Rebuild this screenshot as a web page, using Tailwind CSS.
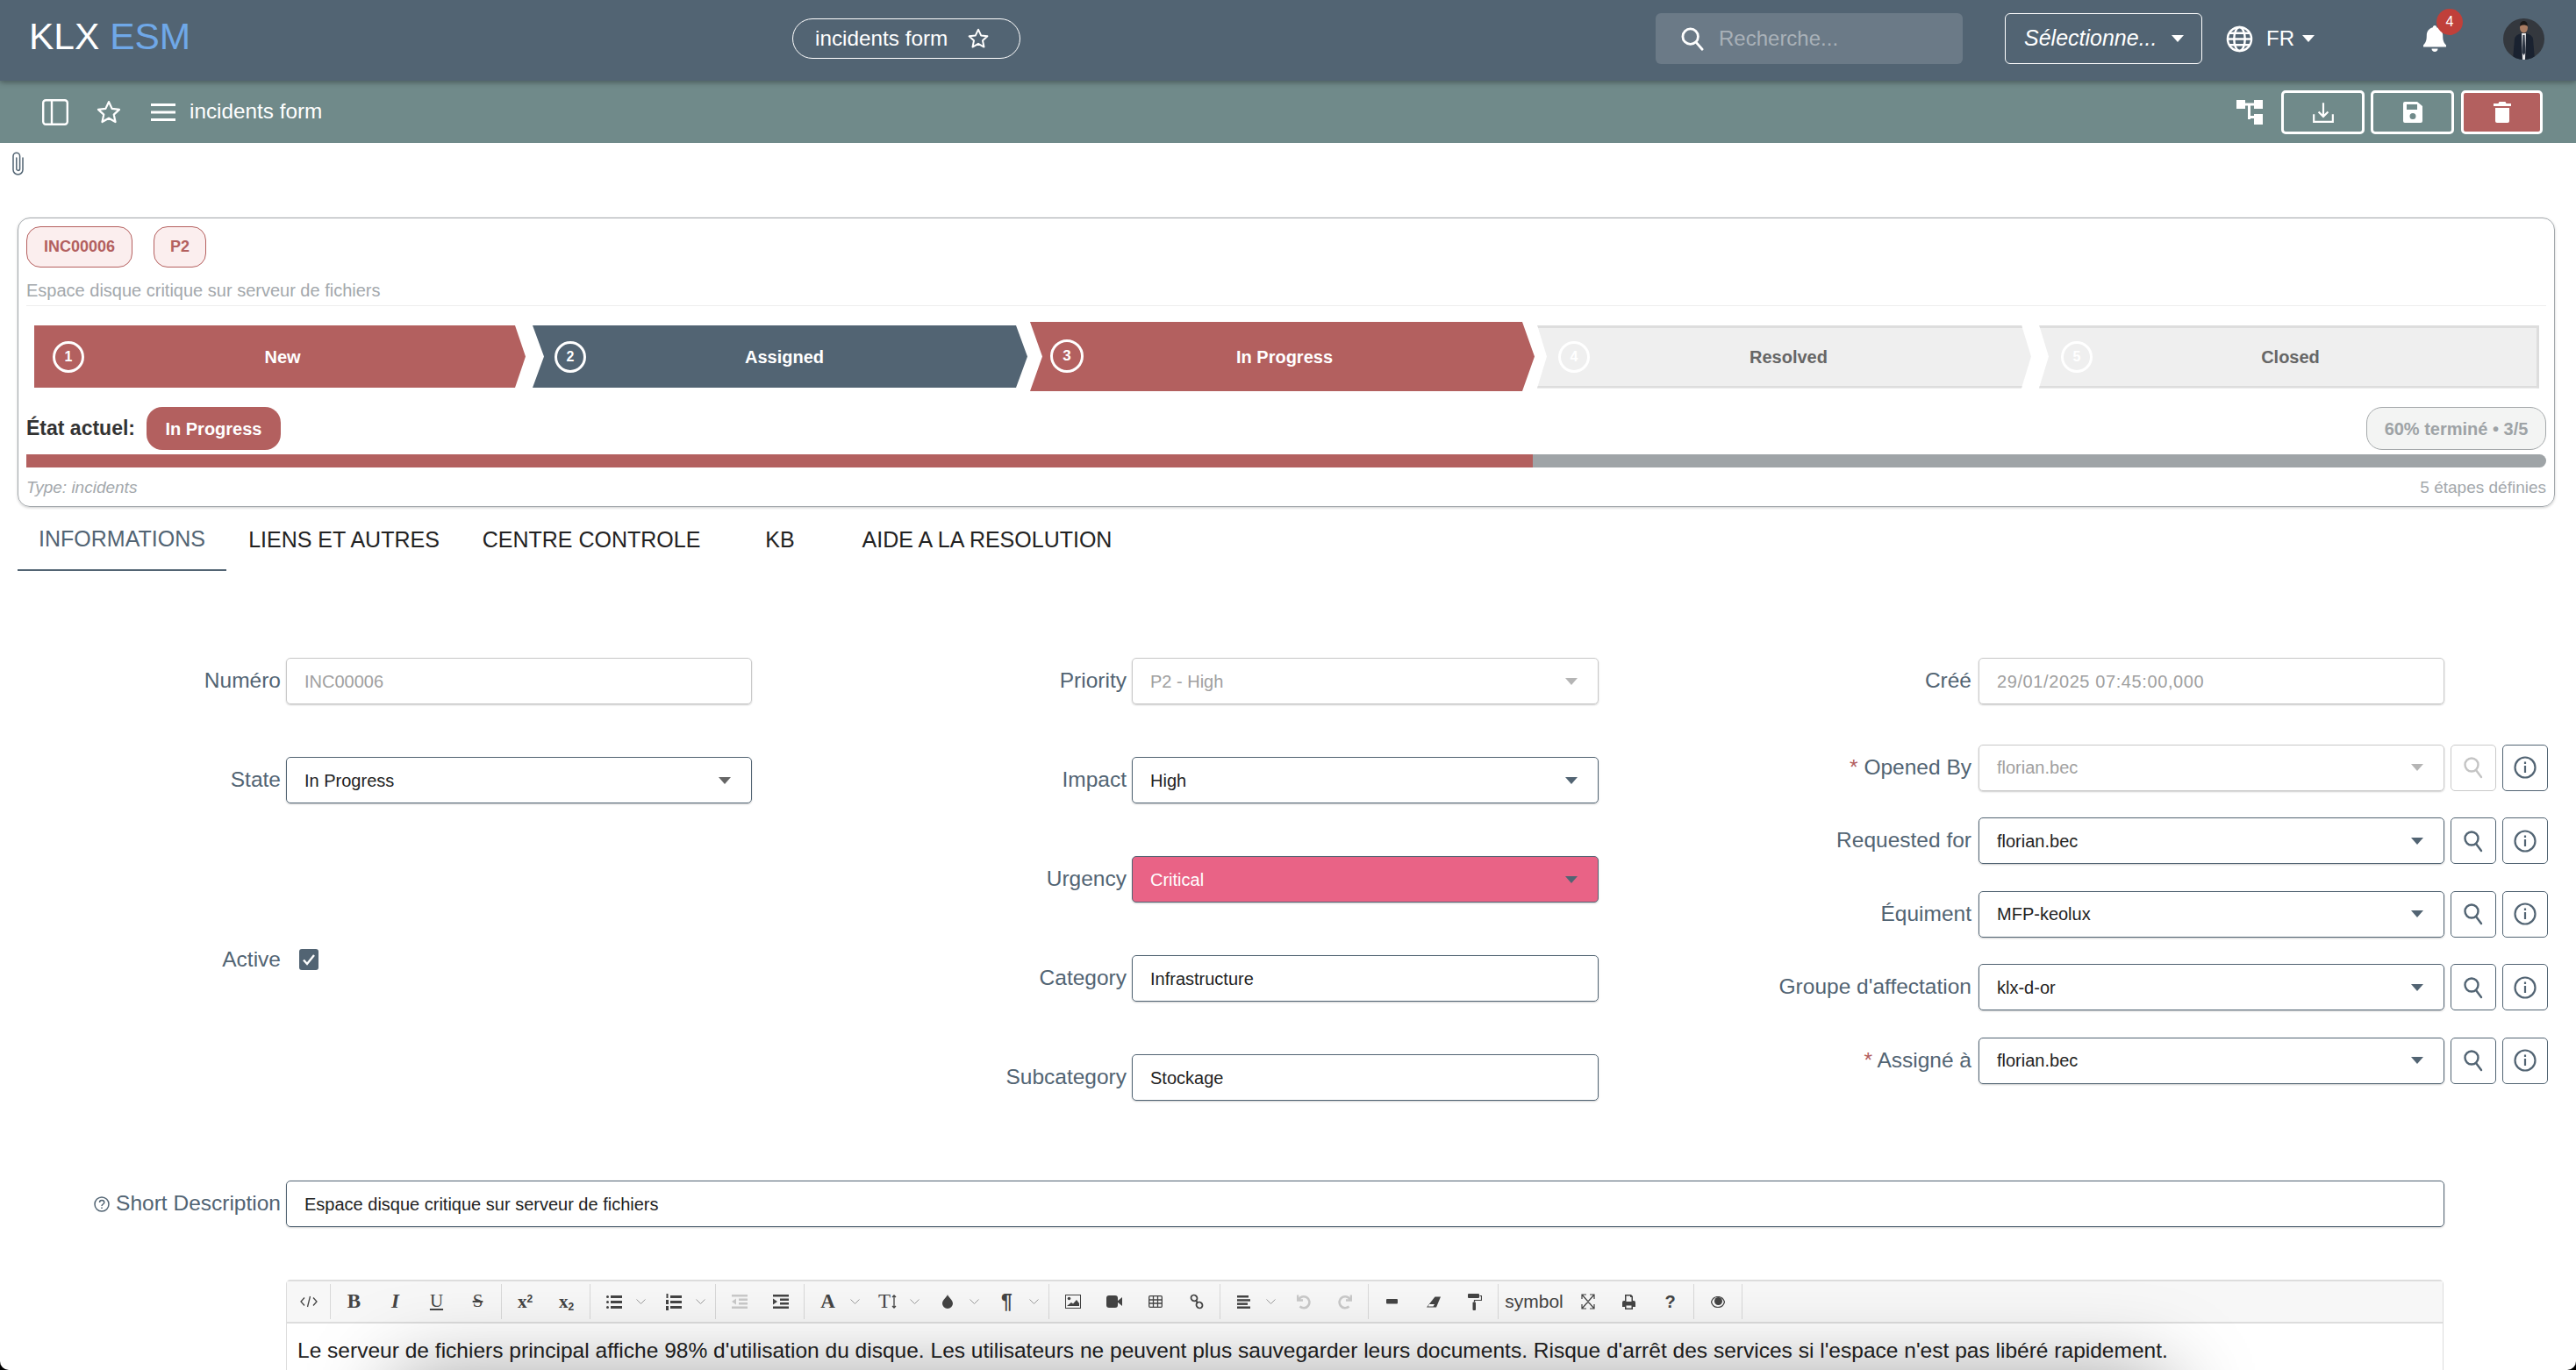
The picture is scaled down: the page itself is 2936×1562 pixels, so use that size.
<!DOCTYPE html>
<html lang="fr">
<head>
    <meta charset="UTF-8">
    <title>incidents form</title>
    <script src="https://cdn.jsdelivr.net/npm/@tailwindcss/browser@4"></script>
</head>
<body class="bg-black overflow-hidden font-['Liberation_Sans',Arial,sans-serif]">
<div class="relative w-[2936px] h-[1562px] bg-white rounded-b-[10px] overflow-hidden">

    <!-- top bar -->
    <header class="relative z-10 flex items-center h-[92px] pb-[4px] pl-[33px] pr-[36px] bg-[#526473] text-white shadow-[0_2px_6px_rgba(0,0,0,.35)]">
        <div class="w-[181px] -mt-[3px] text-[42.500px] leading-none whitespace-nowrap">KLX <span class="text-[#6fa8e8]">ESM</span></div>
        <div class="ml-[689px] flex items-center w-[260px] h-[46px] pl-[25px] rounded-full border border-white text-[24.300px]">
            incidents form
            <svg class="ml-[22px]" width="26" height="26" viewBox="0 0 24 24" fill="none" stroke="white" stroke-width="1.8" stroke-linejoin="round"><path d="M12 2.5l2.9 6.2 6.7.8-5 4.6 1.4 6.7-6-3.4-6 3.4 1.4-6.7-5-4.6 6.700-.8z"/></svg>
        </div>
        <div class="ml-auto flex items-center w-[350px] h-[58px] pl-[28px] rounded-[6px] bg-[#6b7a87] text-[24px] text-[#a9b1b8]">
            <svg width="28" height="28" viewBox="0 0 24 24" fill="none" stroke="white" stroke-width="2.4" stroke-linecap="round"><circle cx="10" cy="10" r="7.5"/><path d="M15.5 15.5l6 7"/></svg>
            <span class="ml-[16px]">Recherche...</span>
        </div>
        <div class="ml-[48px] flex items-center justify-between w-[225px] h-[58px] pl-[21px] pr-[20px] rounded-[6px] border border-white text-[25px] italic">
            Sélectionne...
            <span class="w-0 h-0 border-x-[7px] border-x-transparent border-t-[8px] border-t-white"></span>
        </div>
        <svg class="ml-[27px]" width="31" height="31" viewBox="0 0 24 24" fill="none" stroke="white" stroke-width="1.9"><circle cx="12" cy="12" r="10.5"/><ellipse cx="12" cy="12" rx="4.8" ry="10.5"/><path d="M1.5 12h21M3 6.8h18M3 17.2h18"/></svg>
        <span class="ml-[15px] text-[24px]">FR</span>
        <span class="ml-[9px] w-0 h-0 border-x-[7px] border-x-transparent border-t-[8px] border-t-white"></span>
        <div class="relative ml-[124px] w-[26px] h-[30px]">
            <svg width="26" height="30" viewBox="0 0 26 30" fill="white"><path d="M13 0c1.300 0 2.200 1 2.200 2.300 4.400 1 7 4.700 7 9.200 0 6 1.300 8.500 3.800 11v2H0v-2c2.500-2.500 3.800-5 3.800-11 0-4.500 2.600-8.200 7-9.200C10.800 1 11.700 0 13 0z"/><path d="M9.500 26.500h7c0 2-1.500 3.500-3.500 3.500s-3.500-1.500-3.500-3.500z"/></svg>
            <span class="absolute -top-[19px] left-[15px] flex items-center justify-center w-[30px] h-[30px] rounded-full bg-[#c0403a] text-[16px]">4</span>
        </div>
        <div class="ml-[65px] w-[47px] h-[47px] rounded-full overflow-hidden">
            <svg width="47" height="47" viewBox="0 0 47 47"><rect width="47" height="47" fill="#34383e"/><path d="M11 47l2-24c1-4 6-6 10.500-6s9.500 2 10.500 6l2 24z" fill="#1a2230"/><path d="M21 17h5l-1 30h-3z" fill="#e8e8ea"/><path d="M22.500 19h2l.8 20-1.800 3-1.800-3z" fill="#2b3442"/><ellipse cx="23.500" cy="10.500" rx="4.500" ry="6" fill="#a97c62"/><path d="M19 9c0-4 2-6 4.500-6s4.500 2 4.500 6c-2-2-7-2-9 0z" fill="#1b1a1a"/></svg>
        </div>
    </header>

    <!-- sub bar -->
    <div class="flex items-center h-[71px] pl-[48px] pr-[38px] bg-[#708a8a] text-white">
        <svg width="30" height="30" viewBox="0 0 30 30" fill="none" stroke="white" stroke-width="2.400"><rect x="1.200" y="1.200" width="27.600" height="27.600" rx="3"/><path d="M11 1v28"/></svg>
        <svg class="ml-[31px]" width="30" height="30" viewBox="0 0 24 24" fill="none" stroke="white" stroke-width="1.800" stroke-linejoin="round"><path d="M12 2.500l2.900 6.200 6.700.8-5 4.600 1.400 6.700-6-3.400-6 3.400 1.400-6.700-5-4.600 6.700-.8z"/></svg>
        <svg class="ml-[33px]" width="28" height="20" viewBox="0 0 28 20" fill="white"><rect width="28" height="3"/><rect y="8.500" width="28" height="3"/><rect y="17" width="28" height="3"/></svg>
        <span class="ml-[16px] text-[24.300px]">incidents form</span>
        <svg class="ml-auto" width="30" height="28" viewBox="0 0 30 28" fill="white"><rect width="10" height="10"/><rect x="20" width="10" height="10"/><rect x="10" y="3.500" width="10" height="3"/><rect x="13" y="6" width="3" height="16"/><rect x="13" y="18" width="8" height="3"/><rect x="20" y="16" width="10" height="12"/></svg>
        <div class="ml-[21px] flex items-center justify-center w-[95px] h-[50px] rounded-[5px] border-[3px] border-white">
            <svg width="26" height="26" viewBox="0 0 24 24" fill="none" stroke="white" stroke-width="2"><path d="M12 2v14M7 11.500l5 5 5-5"/><path d="M2 14v8h20v-8"/></svg>
        </div>
        <div class="ml-[7px] flex items-center justify-center w-[95px] h-[50px] rounded-[5px] border-[3px] border-white">
            <svg width="22" height="24" viewBox="0 0 22 24" fill="white" fill-rule="evenodd"><path d="M2 0h14l6 5v17a2 2 0 0 1-2 2H2a2 2 0 0 1-2-2V2a2 2 0 0 1 2-2zM4 3v6h12V3zM11 13a3.500 3.500 0 1 0 0 7 3.500 3.500 0 0 0 0-7z"/></svg>
        </div>
        <div class="ml-[8px] flex items-center justify-center w-[93px] h-[50px] rounded-[5px] border-[3px] border-white bg-[#b3605f]">
            <svg width="20" height="24" viewBox="0 0 20 24" fill="white"><path d="M6.500 0h7l1 2H20v3H0V2h5.500z"/><path d="M2 7h16v15a2 2 0 0 1-2 2H4a2 2 0 0 1-2-2z"/></svg>
        </div>
    </div>

    <!-- attachment -->
    <div class="h-[85px] pl-[13px] pt-[10px]">
        <svg width="15" height="27" viewBox="0 0 15 27" fill="none" stroke="#526473" stroke-width="1.500" stroke-linecap="round"><path d="M13 7v13.500a5.500 5.500 0 0 1-11 0V5a3.800 3.800 0 0 1 7.600 0v14.500a1.900 1.900 0 0 1-3.800 0V7"/></svg>
    </div>

    <!-- workflow card -->
    <section class="ml-[20px] w-[2892px] px-[9px] pt-[9px] pb-[9px] rounded-[14px] border border-[#a4a9ad] shadow-[0_1px_3px_rgba(0,0,0,.2)]">
        <div class="flex gap-[24px]">
            <span class="flex items-center justify-center w-[121px] h-[47px] rounded-[16px] border border-[#b5605f] bg-[#fbeeee] text-[18px] font-bold text-[#b3605f]">INC00006</span>
            <span class="flex items-center justify-center w-[60px] h-[47px] rounded-[16px] border border-[#b5605f] bg-[#fbeeee] text-[18px] font-bold text-[#b3605f]">P2</span>
        </div>
        <p class="mt-[12px] text-[20px] leading-[28px] text-[#a3a8ac]">Espace disque critique sur serveur de fichiers</p>
        <div class="mt-[3px] h-[1px] bg-[#eeeeee]"></div>

        <div class="mt-[18px] flex items-center h-[79px] ml-[9px] text-[20px] font-bold">
            <div class="relative flex items-center justify-center w-[560px] h-[71px] pl-[6px] bg-[#b3605f] text-white [clip-path:polygon(0_0,548px_0,560px_50%,548px_100%,0_100%)]">
                <span class="absolute left-[21px] top-[18px] flex items-center justify-center w-[36px] h-[36px] rounded-full border-[3px] border-white text-[16px]">1</span>New
            </div>
            <div class="relative ml-[8px] flex items-center justify-center w-[564px] h-[71px] pl-[10px] bg-[#526473] text-white [clip-path:polygon(0_0,551px_0,564px_50%,551px_100%,0_100%,13px_50%)]">
                <span class="absolute left-[25px] top-[18px] flex items-center justify-center w-[36px] h-[36px] rounded-full border-[3px] border-white text-[16px]">2</span>Assigned
            </div>
            <div class="relative ml-[3px] flex items-center justify-center w-[575px] h-[79px] pl-[5px] bg-[#b3605f] text-white [clip-path:polygon(0_0,561px_0,575px_50%,561px_100%,0_100%,14px_50%)]">
                <span class="absolute left-[23px] top-[20px] flex items-center justify-center w-[38px] h-[38px] rounded-full border-[3px] border-white text-[17px]">3</span>In Progress
            </div>
            <div class="relative ml-[3px] flex items-center justify-center w-[563px] h-[72px] pl-[10px] border-y-[3px] border-[#dddddd] bg-[#efefef] text-[#666666] [clip-path:polygon(0_0,552px_0,563px_50%,552px_100%,0_100%,11px_50%)]">
                <span class="absolute left-[24px] top-[15px] flex items-center justify-center w-[36px] h-[36px] rounded-full border-[3px] border-white text-[16px] text-white">4</span>Resolved
            </div>
            <div class="relative ml-[9px] flex items-center justify-center w-[570px] h-[72px] pl-[6px] border-y-[3px] border-r-[3px] border-[#dddddd] bg-[#efefef] text-[#666666] [clip-path:polygon(0_0,100%_0,100%_100%,0_100%,11px_50%)]">
                <span class="absolute left-[25px] top-[15px] flex items-center justify-center w-[36px] h-[36px] rounded-full border-[3px] border-white text-[16px] text-white">5</span>Closed
            </div>
        </div>

        <div class="mt-[18px] flex items-center h-[49px]">
            <span class="text-[23px] font-bold text-[#333333]">État actuel:</span>
            <span class="ml-[13px] flex items-center justify-center w-[153px] h-[49px] rounded-[18px] bg-[#b3605f] text-[20px] font-bold text-white">In Progress</span>
            <span class="ml-auto flex items-center justify-center w-[205px] h-[49px] rounded-[18px] border border-[#a5a9ab] bg-[#f3f4f3] text-[20px] font-bold text-[#9ea3a6]">60% terminé • 3/5</span>
        </div>
        <div class="mt-[5px] h-[15px] rounded-r-full bg-[#9fa4a7] overflow-hidden">
            <div class="h-full bg-[#b3605f]" style="width: 59.8%"></div>
        </div>
        <div class="mt-[11px] flex justify-between text-[19px] leading-[24px] text-[#a3a8ac]">
            <span class="italic">Type: incidents</span>
            <span>5 étapes définies</span>
        </div>
    </section>

    <!-- tabs -->
    <nav class="flex h-[73px] pl-[20px] text-[25px] text-[#222222]">
        <a class="flex items-center justify-center w-[238px] pt-[2px] border-b-2 border-[#526473] text-[#526473]">INFORMATIONS</a>
        <a class="flex items-center justify-center w-[268px] pt-[2px]">LIENS ET AUTRES</a>
        <a class="flex items-center justify-center w-[296px] pt-[2px]">CENTRE CONTROLE</a>
        <a class="flex items-center justify-center w-[134px] pt-[2px]">KB</a>
        <a class="flex items-center justify-center w-[338px] pt-[2px]">AIDE A LA RESOLUTION</a>
    </nav>

    <!-- form -->
    <div class="flex items-start pt-[99px] text-[24.500px] text-[#526473]">
        <div class="flex flex-col gap-[60px] w-[857px]">
            <div class="flex items-center h-[53px]">
                <label class="w-[320px] text-right">Numéro</label>
                <div class="ml-[6px] flex items-center w-[531px] h-[53px] px-[20px] rounded-[5px] border border-[#c9c9c9] text-[20px] text-[#a0a0a0] shadow-[0_1px_2px_rgba(0,0,0,.2)]">INC00006</div>
            </div>
            <div class="flex items-center h-[53px]">
                <label class="w-[320px] text-right">State</label>
                <div class="ml-[6px] flex items-center justify-between w-[531px] h-[53px] pl-[20px] pr-[23px] rounded-[5px] border border-[#526473] text-[20px] text-[#222222] shadow-[0_1px_2px_rgba(0,0,0,.2)]">In Progress<span class="w-0 h-0 border-x-[7.500px] border-x-transparent border-t-[8px] border-t-[#666666]"></span></div>
            </div>
            <div class="flex items-center h-[24px] mt-[106px]">
                <label class="w-[320px] text-right">Active</label>
                <span class="ml-[21px] flex items-center justify-center w-[22px] h-[24px] rounded-[3px] bg-[#526473]">
                    <svg width="16" height="16" viewBox="0 0 16 16" fill="none" stroke="white" stroke-width="2.400"><path d="M2 8.500l4 4.500 8-10"/></svg>
                </span>
            </div>
        </div>

        <div class="flex flex-col gap-[60px] w-[965px]">
            <div class="flex items-center h-[53px]">
                <label class="w-[427px] text-right">Priority</label>
                <div class="ml-[6px] flex items-center justify-between w-[532px] h-[53px] pl-[20px] pr-[23px] rounded-[5px] border border-[#c9c9c9] text-[20px] text-[#a0a0a0] shadow-[0_1px_2px_rgba(0,0,0,.2)]">P2 - High<span class="w-0 h-0 border-x-[7.500px] border-x-transparent border-t-[8px] border-t-[#b5b5b5]"></span></div>
            </div>
            <div class="flex items-center h-[53px]">
                <label class="w-[427px] text-right">Impact</label>
                <div class="ml-[6px] flex items-center justify-between w-[532px] h-[53px] pl-[20px] pr-[23px] rounded-[5px] border border-[#526473] text-[20px] text-[#222222] shadow-[0_1px_2px_rgba(0,0,0,.2)]">High<span class="w-0 h-0 border-x-[7.500px] border-x-transparent border-t-[8px] border-t-[#526473]"></span></div>
            </div>
            <div class="flex items-center h-[53px]">
                <label class="w-[427px] text-right">Urgency</label>
                <div class="ml-[6px] flex items-center justify-between w-[532px] h-[53px] pl-[20px] pr-[23px] rounded-[5px] border border-[#526473] bg-[#e96386] text-[20px] text-white shadow-[0_1px_2px_rgba(0,0,0,.2)]">Critical<span class="w-0 h-0 border-x-[7.500px] border-x-transparent border-t-[8px] border-t-[#526473]"></span></div>
            </div>
            <div class="flex items-center h-[53px]">
                <label class="w-[427px] text-right">Category</label>
                <div class="ml-[6px] flex items-center w-[532px] h-[53px] px-[20px] rounded-[5px] border border-[#526473] text-[20px] text-[#222222] shadow-[0_1px_2px_rgba(0,0,0,.2)]">Infrastructure</div>
            </div>
            <div class="flex items-center h-[53px]">
                <label class="w-[427px] text-right">Subcategory</label>
                <div class="ml-[6px] flex items-center w-[532px] h-[53px] px-[20px] rounded-[5px] border border-[#526473] text-[20px] text-[#222222] shadow-[0_1px_2px_rgba(0,0,0,.2)]">Stockage</div>
            </div>
        </div>

        <div class="flex flex-col gap-[30.500px] w-[1114px]">
            <div class="flex items-center h-[53px] mb-[15px]">
                <label class="w-[425px] text-right">Créé</label>
                <div class="ml-[8px] flex items-center w-[531px] h-[53px] px-[20px] rounded-[5px] border border-[#c9c9c9] text-[20px] tracking-[.6px] text-[#a0a0a0] shadow-[0_1px_2px_rgba(0,0,0,.2)]">29/01/2025 07:45:00,000</div>
            </div>
            <div class="flex items-center h-[53px]">
                <label class="w-[425px] text-right"><span class="text-[#b3605f]">*</span> Opened By</label>
                <div class="ml-[8px] flex items-center justify-between w-[531px] h-[53px] px-[20px] rounded-[5px] border border-[#c9c9c9] text-[20px] text-[#a0a0a0] shadow-[0_1px_2px_rgba(0,0,0,.2)]">florian.bec<span class="mr-[3px] w-0 h-0 border-x-[7.500px] border-x-transparent border-t-[8px] border-t-[#b5b5b5]"></span></div>
                <span class="ml-[7px] flex items-center justify-center w-[52px] h-[53px] rounded-[5px] border border-[#c9c9c9]"><svg width="24" height="26" viewBox="0 0 24 26" fill="none" stroke="#c4c4c4" stroke-width="2.400" stroke-linecap="round"><circle cx="10" cy="10" r="7.500"/><path d="M15 16l6 8"/></svg></span>
                <span class="ml-[7px] flex items-center justify-center w-[52px] h-[53px] rounded-[5px] border border-[#526473]"><svg width="26" height="26" viewBox="0 0 26 26" fill="none" stroke="#526473" stroke-width="2.200"><circle cx="13" cy="13" r="11.500"/><path d="M13 11v8M13 6.500v2.500"/></svg></span>
            </div>
            <div class="flex items-center h-[53px]">
                <label class="w-[425px] text-right">Requested for</label>
                <div class="ml-[8px] flex items-center justify-between w-[531px] h-[53px] px-[20px] rounded-[5px] border border-[#526473] text-[20px] text-[#222222] shadow-[0_1px_2px_rgba(0,0,0,.2)]">florian.bec<span class="mr-[3px] w-0 h-0 border-x-[7.500px] border-x-transparent border-t-[8px] border-t-[#526473]"></span></div>
                <span class="ml-[7px] flex items-center justify-center w-[52px] h-[53px] rounded-[5px] border border-[#526473]"><svg width="24" height="26" viewBox="0 0 24 26" fill="none" stroke="#526473" stroke-width="2.400" stroke-linecap="round"><circle cx="10" cy="10" r="7.500"/><path d="M15 16l6 8"/></svg></span>
                <span class="ml-[7px] flex items-center justify-center w-[52px] h-[53px] rounded-[5px] border border-[#526473]"><svg width="26" height="26" viewBox="0 0 26 26" fill="none" stroke="#526473" stroke-width="2.200"><circle cx="13" cy="13" r="11.500"/><path d="M13 11v8M13 6.500v2.500"/></svg></span>
            </div>
            <div class="flex items-center h-[53px]">
                <label class="w-[425px] text-right">Équiment</label>
                <div class="ml-[8px] flex items-center justify-between w-[531px] h-[53px] px-[20px] rounded-[5px] border border-[#526473] text-[20px] text-[#222222] shadow-[0_1px_2px_rgba(0,0,0,.2)]">MFP-keolux<span class="mr-[3px] w-0 h-0 border-x-[7.500px] border-x-transparent border-t-[8px] border-t-[#526473]"></span></div>
                <span class="ml-[7px] flex items-center justify-center w-[52px] h-[53px] rounded-[5px] border border-[#526473]"><svg width="24" height="26" viewBox="0 0 24 26" fill="none" stroke="#526473" stroke-width="2.400" stroke-linecap="round"><circle cx="10" cy="10" r="7.500"/><path d="M15 16l6 8"/></svg></span>
                <span class="ml-[7px] flex items-center justify-center w-[52px] h-[53px] rounded-[5px] border border-[#526473]"><svg width="26" height="26" viewBox="0 0 26 26" fill="none" stroke="#526473" stroke-width="2.200"><circle cx="13" cy="13" r="11.500"/><path d="M13 11v8M13 6.500v2.500"/></svg></span>
            </div>
            <div class="flex items-center h-[53px]">
                <label class="w-[425px] text-right">Groupe d'affectation</label>
                <div class="ml-[8px] flex items-center justify-between w-[531px] h-[53px] px-[20px] rounded-[5px] border border-[#526473] text-[20px] text-[#222222] shadow-[0_1px_2px_rgba(0,0,0,.2)]">klx-d-or<span class="mr-[3px] w-0 h-0 border-x-[7.500px] border-x-transparent border-t-[8px] border-t-[#526473]"></span></div>
                <span class="ml-[7px] flex items-center justify-center w-[52px] h-[53px] rounded-[5px] border border-[#526473]"><svg width="24" height="26" viewBox="0 0 24 26" fill="none" stroke="#526473" stroke-width="2.400" stroke-linecap="round"><circle cx="10" cy="10" r="7.500"/><path d="M15 16l6 8"/></svg></span>
                <span class="ml-[7px] flex items-center justify-center w-[52px] h-[53px] rounded-[5px] border border-[#526473]"><svg width="26" height="26" viewBox="0 0 26 26" fill="none" stroke="#526473" stroke-width="2.200"><circle cx="13" cy="13" r="11.500"/><path d="M13 11v8M13 6.500v2.500"/></svg></span>
            </div>
            <div class="flex items-center h-[53px]">
                <label class="w-[425px] text-right"><span class="text-[#b3605f]">*</span> Assigné à</label>
                <div class="ml-[8px] flex items-center justify-between w-[531px] h-[53px] px-[20px] rounded-[5px] border border-[#526473] text-[20px] text-[#222222] shadow-[0_1px_2px_rgba(0,0,0,.2)]">florian.bec<span class="mr-[3px] w-0 h-0 border-x-[7.500px] border-x-transparent border-t-[8px] border-t-[#526473]"></span></div>
                <span class="ml-[7px] flex items-center justify-center w-[52px] h-[53px] rounded-[5px] border border-[#526473]"><svg width="24" height="26" viewBox="0 0 24 26" fill="none" stroke="#526473" stroke-width="2.400" stroke-linecap="round"><circle cx="10" cy="10" r="7.500"/><path d="M15 16l6 8"/></svg></span>
                <span class="ml-[7px] flex items-center justify-center w-[52px] h-[53px] rounded-[5px] border border-[#526473]"><svg width="26" height="26" viewBox="0 0 26 26" fill="none" stroke="#526473" stroke-width="2.200"><circle cx="13" cy="13" r="11.500"/><path d="M13 11v8M13 6.500v2.500"/></svg></span>
            </div>
        </div>
    </div>

    <!-- short description -->
    <div class="mt-[91px] flex items-center h-[53px] text-[24.500px] text-[#526473]">
        <label class="flex items-center justify-end w-[320px]">
            <svg class="mr-[7px]" width="18" height="18" viewBox="0 0 18 18" fill="none" stroke="#526473" stroke-width="1.500"><circle cx="9" cy="9" r="8"/><path d="M6.500 7c0-3.300 5.300-3.300 5.300 0 0 2-2.800 2-2.800 4M9 12.500v1.500"/></svg>
            Short Description
        </label>
        <div class="ml-[6px] flex items-center w-[2460px] h-[53px] px-[20px] rounded-[5px] border border-[#526473] text-[20px] text-[#222222] shadow-[0_1px_2px_rgba(0,0,0,.2)]">Espace disque critique sur serveur de fichiers</div>
    </div>

    <!-- editor -->
    <div class="mt-[60px] ml-[326px] w-[2459px] rounded-t-[5px] border border-[#dddddd] border-t-2 text-[#444444]">
        <div class="flex h-[48px] py-[3px] bg-[#f7f7f7] border-b-2 border-[#dddddd] font-['Liberation_Serif',serif] text-[21px]">
            <div class="flex items-center w-[50px] pl-[1px] border-r border-[#d8d8d8]">
                <span class="flex justify-center w-[47px]"><svg width="20" height="14" viewBox="0 0 20 14" fill="none" stroke="#444" stroke-width="1.300"><path d="M5 2.500L1 7l4 4.500M15 2.500L19 7l-4 4.500M11.500 1l-3 12"/></svg></span>
            </div>
            <div class="flex items-center px-[3px] border-r border-[#d8d8d8]">
                <span class="w-[47px] text-center font-bold text-[23px]">B</span>
                <span class="w-[47px] text-center italic font-bold text-[23px]">I</span>
                <span class="w-[47px] text-center"><u>U</u></span>
                <span class="w-[47px] text-center"><s>S</s></span>
            </div>
            <div class="flex items-center px-[3px] border-r border-[#d8d8d8] font-bold">
                <span class="w-[47px] text-center leading-none">x<sup class="text-[12px] font-['Liberation_Sans',sans-serif]">2</sup></span>
                <span class="w-[47px] text-center leading-none">x<sub class="text-[12px] font-['Liberation_Sans',sans-serif]">2</sub></span>
            </div>
            <div class="flex items-center px-[3px] border-r border-[#d8d8d8]">
                <span class="flex justify-center w-[47px]"><svg width="18" height="15" viewBox="0 0 18 15" fill="#444"><rect y="0" width="3" height="3" rx="1.500"/><rect y="6" width="3" height="3" rx="1.500"/><rect y="12" width="3" height="3" rx="1.500"/><rect x="5" y="0" width="13" height="3"/><rect x="5" y="6" width="13" height="3"/><rect x="5" y="12" width="13" height="3"/></svg></span>
                <span class="flex justify-center w-[15px] mr-[6px]"><svg width="11" height="6" viewBox="0 0 11 6" fill="none" stroke="#9a9a9a" stroke-width="1"><path d="M.500.500l5 5 5-5"/></svg></span>
                <span class="flex justify-center w-[47px]"><svg width="18" height="19" viewBox="0 0 18 19" fill="#444"><rect x="0.500" y="0" width="2" height="5"/><rect y="7" width="3" height="5"/><rect y="14" width="3" height="5"/><rect x="5" y="2" width="13" height="3"/><rect x="5" y="8" width="13" height="3"/><rect x="5" y="14" width="13" height="3"/></svg></span>
                <span class="flex justify-center w-[15px] mr-[6px]"><svg width="11" height="6" viewBox="0 0 11 6" fill="none" stroke="#9a9a9a" stroke-width="1"><path d="M.500.500l5 5 5-5"/></svg></span>
            </div>
            <div class="flex items-center px-[3px] border-r border-[#d8d8d8]">
                <span class="flex justify-center w-[47px]"><svg width="18" height="16" viewBox="0 0 18 16" fill="#c9c9c9"><rect width="18" height="2.500"/><rect x="8" y="4.500" width="10" height="2.500"/><rect x="8" y="9" width="10" height="2.500"/><rect y="13.500" width="18" height="2.500"/><path d="M5 4.500v7L0 8z"/></svg></span>
                <span class="flex justify-center w-[47px]"><svg width="18" height="16" viewBox="0 0 18 16" fill="#444"><rect width="18" height="2.500"/><rect x="8" y="4.500" width="10" height="2.500"/><rect x="8" y="9" width="10" height="2.500"/><rect y="13.500" width="18" height="2.500"/><path d="M0 4.500v7L5 8z"/></svg></span>
            </div>
            <div class="flex items-center px-[3px] border-r border-[#d8d8d8]">
                <span class="w-[47px] text-center font-bold text-[23px]">A</span>
                <span class="flex justify-center w-[15px] mr-[6px]"><svg width="11" height="6" viewBox="0 0 11 6" fill="none" stroke="#9a9a9a" stroke-width="1"><path d="M.500.500l5 5 5-5"/></svg></span>
                <span class="flex items-center justify-center w-[47px] text-[23px]">T<svg class="ml-[1px]" width="6" height="16" viewBox="0 0 6 16" fill="none" stroke="#444" stroke-width="1.300"><path d="M3 1v14M1 3l2-2 2 2M1 13l2 2 2-2"/></svg></span>
                <span class="flex justify-center w-[15px] mr-[6px]"><svg width="11" height="6" viewBox="0 0 11 6" fill="none" stroke="#9a9a9a" stroke-width="1"><path d="M.500.500l5 5 5-5"/></svg></span>
                <span class="flex justify-center w-[47px]"><svg width="12" height="16" viewBox="0 0 12 16" fill="#444"><path d="M6 0c1 3 6 6 6 10.200A6 5.800 0 0 1 0 10.200C0 6 5 3 6 0z"/></svg></span>
                <span class="flex justify-center w-[15px] mr-[6px]"><svg width="11" height="6" viewBox="0 0 11 6" fill="none" stroke="#9a9a9a" stroke-width="1"><path d="M.500.500l5 5 5-5"/></svg></span>
                <span class="w-[47px] text-center font-bold text-[23px] font-['Liberation_Sans',sans-serif]">¶</span>
                <span class="flex justify-center w-[15px] mr-[6px]"><svg width="11" height="6" viewBox="0 0 11 6" fill="none" stroke="#9a9a9a" stroke-width="1"><path d="M.500.500l5 5 5-5"/></svg></span>
            </div>
            <div class="flex items-center px-[3px] border-r border-[#d8d8d8]">
                <span class="flex justify-center w-[47px]"><svg width="18" height="16" viewBox="0 0 18 16"><rect x=".500" y=".500" width="17" height="15" fill="none" stroke="#444"/><circle cx="4.500" cy="4.500" r="1.800" fill="#444"/><path d="M2 13l5-4 2 1.500 4-4.500 3 4v3z" fill="#444"/></svg></span>
                <span class="flex justify-center w-[47px]"><svg width="18" height="14" viewBox="0 0 18 14" fill="#444"><rect width="13" height="14" rx="3"/><path d="M12 7l6-5v10z"/></svg></span>
                <span class="flex justify-center w-[47px]"><svg width="16" height="14" viewBox="0 0 16 14" fill="none" stroke="#444" stroke-width="1.300"><rect x=".700" y=".700" width="14.600" height="12.600" rx="1"/><path d="M.700 5h14.600M.700 9h14.600M5.500 1v12M10.500 1v12"/></svg></span>
                <span class="flex justify-center w-[47px]"><svg width="16" height="18" viewBox="0 0 16 18" fill="none" stroke="#444" stroke-width="1.800"><ellipse cx="5" cy="5" rx="3.600" ry="3.300" transform="rotate(40 5 5)"/><ellipse cx="11" cy="13" rx="3.600" ry="3.300" transform="rotate(40 11 13)"/><path d="M6.500 7.500l3 3"/></svg></span>
            </div>
            <div class="flex items-center px-[3px] border-r border-[#d8d8d8]">
                <span class="flex justify-center w-[47px]"><svg width="15" height="15" viewBox="0 0 15 15" fill="#444"><rect width="13" height="2.500"/><rect y="4.200" width="15" height="2.500"/><rect y="8.400" width="12" height="2.500"/><rect y="12.500" width="15" height="2.500"/></svg></span>
                <span class="flex justify-center w-[15px] mr-[6px]"><svg width="11" height="6" viewBox="0 0 11 6" fill="none" stroke="#9a9a9a" stroke-width="1"><path d="M.500.500l5 5 5-5"/></svg></span>
                <span class="flex justify-center w-[47px]"><svg width="16" height="18" viewBox="0 0 16 18" fill="none" stroke="#c9c9c9" stroke-width="2.600"><path d="M1 1.500v6h6"/><path d="M2 7a6.500 6.500 0 1 1 1.500 7.500"/></svg></span>
                <span class="flex justify-center w-[47px]"><svg width="16" height="18" viewBox="0 0 16 18" fill="none" stroke="#c9c9c9" stroke-width="2.600"><path d="M15 1.500v6H9"/><path d="M14 7a6.500 6.500 0 1 0-1.500 7.500"/></svg></span>
            </div>
            <div class="flex items-center px-[3px] border-r border-[#d8d8d8]">
                <span class="flex justify-center w-[47px]"><svg width="13" height="6" viewBox="0 0 13 6" fill="#444"><rect width="13" height="5.500" rx="1"/></svg></span>
                <span class="flex justify-center w-[47px]"><svg width="16" height="13" viewBox="0 0 16 13"><path d="M9.500 .500h6.500L11 12.500H0z" fill="#444"/><path d="M3 9h6L7.500 11.500H1.700z" fill="#fff"/></svg></span>
                <span class="flex justify-center w-[47px]"><svg width="16" height="19" viewBox="0 0 16 19" fill="#444"><rect width="13" height="5" rx="1"/><path d="M13.500 2.500H15.500v5H7.500v2" fill="none" stroke="#444" stroke-width="1.200"/><rect x="5.500" y="9.500" width="3.500" height="9.500" rx="1"/></svg></span>
            </div>
            <div class="flex items-center px-[3px] border-r border-[#d8d8d8] font-['Liberation_Sans',sans-serif]">
                <span class="w-[75px] text-center">symbol</span>
                <span class="flex justify-center w-[47px]"><svg width="16" height="18" viewBox="0 0 16 18" fill="none" stroke="#444" stroke-width="1.200"><path d="M1 6V1h5M15 6V1h-5M1 12v5h5M15 12v5h-5M1 1l14 16M15 1L1 17"/></svg></span>
                <span class="flex justify-center w-[47px]"><svg width="15" height="17" viewBox="0 0 15 17" fill="#444" fill-rule="evenodd"><path d="M3 0h7l2 2v5h1a2 2 0 0 1 2 2v5h-3v3H3v-3H0V9a2 2 0 0 1 2-2h1zM4.500 1.500V8h6V3h-1.500V1.500zM4.500 12.500v3h6v-3z"/></svg></span>
                <span class="w-[47px] text-center font-bold text-[20px]">?</span>
            </div>
            <div class="flex items-center w-[55px] pl-[3px] border-r border-[#d8d8d8]">
                <span class="flex justify-center w-[47px]"><svg width="16" height="13" viewBox="0 0 16 13"><path d="M8 .500c3.500 0 6.500 2.500 7.500 6-1 3.500-4 6-7.500 6s-6.500-2.500-7.500-6c1-3.500 4-6 7.500-6z" fill="none" stroke="#444" stroke-width="1.200"/><circle cx="8.500" cy="5.500" r="4.500" fill="#444"/></svg></span>
            </div>
        </div>
        <div class="h-[60px] pt-[17px] pl-[12px] pr-[13px] text-[24.540px] leading-[28px] text-[#222222] whitespace-nowrap">Le serveur de fichiers principal affiche 98% d'utilisation du disque. Les utilisateurs ne peuvent plus sauvegarder leurs documents. Risque d'arrêt des services si l'espace n'est pas libéré rapidement.</div>
    </div>

    <!-- shadow of the panel just below the fold -->
    <div class="absolute left-[480px] top-[1600px] w-[1960px] h-[100px] shadow-[0_0_100px_30px_rgba(0,0,0,.4)] pointer-events-none"></div>
</div>
</body>
</html>
